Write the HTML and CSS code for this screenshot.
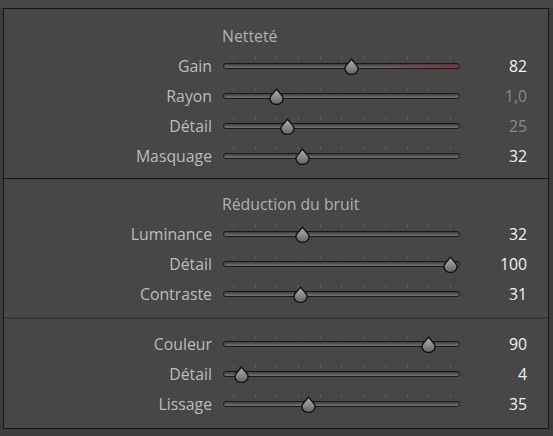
FILE: index.html
```html
<!DOCTYPE html>
<html lang="fr">
<head>
<meta charset="utf-8">
<title>Détail</title>
<link rel="stylesheet" href="styles.css">
</head>
<body>
<svg width="0" height="0" class="defs" aria-hidden="true">
  <defs>
    <linearGradient id="tg" x1="0" y1="0" x2="0" y2="1">
      <stop offset="0" stop-color="#b4b4b4"/>
      <stop offset="1" stop-color="#626262"/>
    </linearGradient>
    <symbol id="thumb" viewBox="0 0 15 17">
      <path d="M7.5 1 C8.8 3.8 14.1 7.2 14.1 10.6 A6.6 5.9 0 0 1 0.9 10.6 C0.9 7.2 6.2 3.8 7.5 1 Z" fill="url(#tg)" stroke="#141414" stroke-width="1.5" stroke-linejoin="round"/>
    </symbol>
  </defs>
</svg>
<div class="frame">
  <div class="panel">
    <section class="group first">
      <div class="row head"><span></span><span class="title">Netteté</span><span></span></div>
      <div class="row"><span class="label">Gain</span><div class="slider"><div class="track gain"></div><div class="range"><div class="ticks"></div><svg class="knob" style="left:54.7%"><use href="#thumb"/></svg></div></div><span class="value">82</span></div>
      <div class="row"><span class="label">Rayon</span><div class="slider"><div class="track"></div><div class="range"><div class="ticks"></div><svg class="knob" style="left:20%"><use href="#thumb"/></svg></div></div><span class="value dim">1,0</span></div>
      <div class="row"><span class="label">Détail</span><div class="slider"><div class="track"></div><div class="range"><div class="ticks"></div><svg class="knob" style="left:25%"><use href="#thumb"/></svg></div></div><span class="value dim">25</span></div>
      <div class="row"><span class="label">Masquage</span><div class="slider"><div class="track"></div><div class="range"><div class="ticks"></div><svg class="knob" style="left:32%"><use href="#thumb"/></svg></div></div><span class="value">32</span></div>
    </section>
    <section class="group second">
      <div class="row head"><span></span><span class="title">Réduction du bruit</span><span></span></div>
      <div class="row"><span class="label">Luminance</span><div class="slider"><div class="track"></div><div class="range"><div class="ticks"></div><svg class="knob" style="left:32%"><use href="#thumb"/></svg></div></div><span class="value">32</span></div>
      <div class="row"><span class="label">Détail</span><div class="slider"><div class="track"></div><div class="range"><div class="ticks"></div><svg class="knob" style="left:100%"><use href="#thumb"/></svg></div></div><span class="value">100</span></div>
      <div class="row"><span class="label">Contraste</span><div class="slider"><div class="track"></div><div class="range"><div class="ticks"></div><svg class="knob" style="left:31%"><use href="#thumb"/></svg></div></div><span class="value">31</span></div>
    </section>
    <section class="group third">
      <div class="row"><span class="label">Couleur</span><div class="slider"><div class="track"></div><div class="range"><div class="ticks"></div><svg class="knob" style="left:90%"><use href="#thumb"/></svg></div></div><span class="value">90</span></div>
      <div class="row"><span class="label">Détail</span><div class="slider"><div class="track"></div><div class="range"><div class="ticks"></div><svg class="knob" style="left:4%"><use href="#thumb"/></svg></div></div><span class="value">4</span></div>
      <div class="row"><span class="label">Lissage</span><div class="slider"><div class="track"></div><div class="range"><div class="ticks"></div><svg class="knob" style="left:35%"><use href="#thumb"/></svg></div></div><span class="value">35</span></div>
    </section>
  </div>
</div>
</body>
</html>
```
FILE: styles.css
```css
html, body {
  margin: 0;
  padding: 0;
}
body {
  background: #3c3c3c;
  width: 553px;
  height: 436px;
  overflow: hidden;
  font-family: "Open Sans", "Noto Sans", sans-serif;
  font-size: 15.8px;
}
.defs {
  position: absolute;
  width: 0;
  height: 0;
}
.frame {
  background: linear-gradient(#464646, #464646) top / 100% 8px no-repeat, #3d3d3d;
  padding: 8px 4px 0 3px;
  height: 436px;
  box-sizing: border-box;
}
.panel {
  width: 546px;
  height: 421px;
  box-sizing: border-box;
  background: #474747;
  border: 1px solid #161616;
  display: flex;
  flex-direction: column;
}
.group {
  display: flex;
  flex-direction: column;
}
.group.first {
  padding: 12px 0 7px;
  border-bottom: 1px solid #141414;
}
.group.second {
  padding: 10px 0 8px;
  border-bottom: 2px solid #3a3a3a;
}
.group.third {
  padding: 10px 0 8px;
}
.row {
  display: grid;
  grid-template-columns: 208px 237px 56px;
  column-gap: 11px;
  height: 30px;
  align-items: center;
}
.label {
  text-align: right;
  color: #bcbcbc;
  line-height: 30px;
}
.title {
  color: #b0b0b0;
  white-space: nowrap;
  margin-left: -1px;
  line-height: 30px;
}
.value {
  text-align: right;
  color: #f2f2f2;
  line-height: 30px;
}
.value.dim {
  color: #8a8a8a;
}
.slider {
  position: relative;
  height: 30px;
}
.track {
  position: absolute;
  left: 0;
  right: 0;
  top: 12px;
  height: 6px;
  box-sizing: border-box;
  border: 1px solid #1a1a1a;
  border-radius: 3px;
  background: linear-gradient(#3e3e3e, #747474);
}
.track.gain {
  background:
    linear-gradient(to right, rgba(0,0,0,0) 60%, rgba(120,44,54,0.75) 100%),
    linear-gradient(#3e3e3e, #747474);
}
.range {
  position: absolute;
  left: 10px;
  right: 10px;
  top: 0;
  bottom: 0;
}
.ticks {
  position: absolute;
  left: 0;
  width: 218px;
  top: 6px;
  height: 3px;
  background: repeating-linear-gradient(to right, #5c5c5c 0 1px, transparent 1px 21.7px);
}
.knob {
  position: absolute;
  width: 15px;
  height: 17px;
  top: 7px;
  margin-left: -7.5px;
  overflow: visible;
}
```
